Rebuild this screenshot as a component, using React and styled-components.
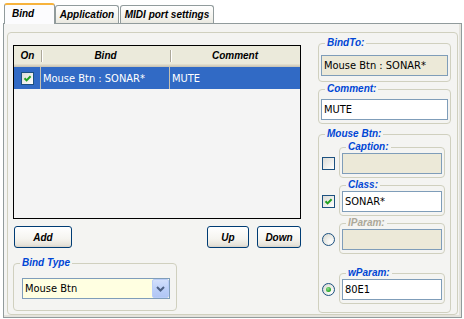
import React from 'react';
import styled, { createGlobalStyle } from 'styled-components';

const GlobalStyle = createGlobalStyle`
  body {
    margin: 0;
    background: #ffffff;
    font-family: "DejaVu Sans Condensed", "DejaVu Sans", sans-serif;
    font-stretch: condensed;
    font-size: 11px;
  }
`;

const Window = styled.div`
  padding: 3px 0 0 3px;
  width: 459px;
`;

const TabStrip = styled.div`
  display: flex;
  align-items: flex-end;
  height: 20px;
  padding-left: 1px;
`;

const Tab = styled.div`
  box-sizing: border-box;
  position: relative;
  z-index: ${p => (p.$active ? 2 : 0)};
  width: ${p => p.$w}px;
  height: ${p => (p.$active ? 21 : 18)}px;
  margin-left: ${p => p.$gap || 0}px;
  margin-bottom: ${p => (p.$active ? -1 : 0)}px;
  display: flex;
  align-items: center;
  justify-content: ${p => (p.$left ? 'flex-start' : 'center')};
  padding: 0 0 ${p => (p.$active ? 3 : 1)}px ${p => (p.$left ? 7 : 0)}px;
  border: 1px solid #919b9c;
  border-bottom: none;
  border-top: ${p => (p.$active ? '2px solid #f7b33d' : '1px solid #919b9c')};
  border-radius: 3px 3px 0 0;
  background: ${p => (p.$active ? '#fcfcfe' : 'linear-gradient(#ffffff, #f3f2ec 70%, #e9e8e0)')};
  font: italic bold 10px "Liberation Sans", sans-serif;
  color: #000;
  white-space: nowrap;
`;

const Panel = styled.div`
  box-sizing: border-box;
  width: 459px;
  height: 295px;
  border: 1px solid #919b9c;
  background: #f4f4f2;
  padding: 8px 3px 2px 3px;
  box-shadow: inset -2px -2px 0 #e4e3dc;
`;

const BigGroup = styled.div`
  box-sizing: border-box;
  height: 100%;
  display: flex;
  gap: 17px;
  padding: 4px 5px 3px 5px;
  border: 1px solid #d0d0bf;
  border-radius: 4px;
`;

const LeftCol = styled.div`
  width: 288px;
  display: flex;
  flex-direction: column;
  padding-top: 8px;
`;

const RightCol = styled.div`
  width: 133px;
  display: flex;
  flex-direction: column;
`;

const List = styled.div`
  box-sizing: border-box;
  height: 174px;
  border: 1px solid #000;
  background: #f4f4f4;
`;

const cols = '27px 129px 1fr';

const Header = styled.div`
  display: grid;
  grid-template-columns: ${cols};
  height: 21px;
  background: #ebeadb;
  box-shadow: inset 0 -1px 0 #cbc7b8, inset 0 -2px 0 #d6d2c2, inset 0 -3px 0 #e2decd;
`;

const HeadCell = styled.div`
  position: relative;
  display: flex;
  align-items: center;
  justify-content: center;
  padding-bottom: 2px;
  font: italic bold 10px "Liberation Sans", sans-serif;
  color: #000;
  &::after {
    content: '';
    display: ${p => (p.$last ? 'none' : 'block')};
    position: absolute;
    right: -1px;
    top: 4px;
    bottom: 5px;
    width: 1px;
    background: #aca899;
    box-shadow: 1px 0 0 #ffffff;
  }
`;

const Row = styled.div`
  display: grid;
  grid-template-columns: ${cols};
  height: 22px;
  background: #316ac5;
  color: #ffffff;
`;

const Cell = styled.div`
  display: flex;
  align-items: center;
  justify-content: ${p => (p.$center ? 'center' : 'flex-start')};
  padding-left: ${p => (p.$center ? 0 : 2)}px;
  border-right: ${p => (p.$last ? 'none' : '1px solid #c5bfae')};
  white-space: nowrap;
`;

const ButtonRow = styled.div`
  display: flex;
  margin-top: 7px;
  padding-left: 1px;
`;

const XpButton = styled.button`
  box-sizing: border-box;
  width: ${p => p.$w}px;
  height: 22px;
  margin-left: ${p => p.$ml || '0'};
  padding: 0;
  border: 1px solid #003c74;
  border-radius: 3px;
  background: linear-gradient(#ffffff, #f5f4ef 60%, #e6e3da 90%, #d6d0c5);
  font: italic bold 10px "Liberation Sans", sans-serif;
  color: #000;
`;

const Group = styled.fieldset`
  box-sizing: border-box;
  min-width: 0;
  margin: ${p => p.$m || '0'};
  padding: ${p => p.$pad || '0 2px 3px 2px'};
  width: ${p => (p.$w ? `${p.$w}px` : 'auto')};
  flex: ${p => (p.$grow ? 1 : 'none')};
  border: 1px solid #d0d0bf;
  border-radius: 4px;
`;

const Caption = styled.legend`
  margin-left: ${p => p.$ml ?? 4}px;
  padding: 0 2px;
  font: italic bold 10px/12px "Liberation Sans", sans-serif;
  color: ${p => (p.$off ? '#aca899' : '#0046d5')};
`;

const Field = styled.div`
  box-sizing: border-box;
  height: 21px;
  display: flex;
  align-items: center;
  padding-left: 2px;
  border: 1px solid #7f9db9;
  background: ${p => (p.$ro ? '#ece9d8' : '#ffffff')};
  color: #000;
  white-space: nowrap;
  overflow: hidden;
`;

const Combo = styled.div`
  box-sizing: border-box;
  width: 148px;
  height: 21px;
  display: flex;
  align-items: center;
  border: 1px solid #7f9db9;
  background: #ffffe1;
  padding-left: 2px;
`;

const ComboText = styled.span`
  flex: 1;
  color: #000;
`;

const DropBtn = styled.span`
  box-sizing: border-box;
  width: 17px;
  height: 19px;
  display: flex;
  align-items: center;
  justify-content: center;
  border: 1px solid #b9cdf8;
  border-radius: 2px;
  background: linear-gradient(#d3e0fc, #bacef8 60%, #b1c6f4);
`;

const OptionRow = styled.div`
  display: flex;
  align-items: flex-end;
  gap: 4px;
  margin-top: ${p => p.$mt ?? 1}px;
`;

const Box = styled.span`
  box-sizing: border-box;
  flex: none;
  width: 13px;
  height: 13px;
  margin-bottom: ${p => p.$mb ?? 0}px;
  display: flex;
  align-items: center;
  justify-content: center;
  border: 1px solid #1c5180;
  border-radius: ${p => (p.$round ? '50%' : '0')};
  background: ${p => (p.$round ? 'radial-gradient(circle at 70% 70%, #ffffff, #e6e6e0 60%, #d5d5ce)' : 'linear-gradient(135deg, #dcdcd7, #f4f4f1 70%, #ffffff)')};
`;

const Dot = styled.span`
  width: 5px;
  height: 5px;
  border-radius: 50%;
  background: radial-gradient(circle at 40% 35%, #8fe08f, #21a121 70%);
`;

const SubGroup = styled(Group)`
  flex: 1;
`;

const Check = () => (
  <svg width="9" height="9" viewBox="0 0 9 9">
    <path d="M1.5 4.2 L3.6 6.4 L7.6 2.2" fill="none" stroke="#21a121" strokeWidth="2" />
  </svg>
);

const Chevron = () => (
  <svg width="9" height="6" viewBox="0 0 9 6">
    <path d="M1 1 L4.5 4.5 L8 1" fill="none" stroke="#4d6185" strokeWidth="2" />
  </svg>
);

const CheckBox = ({ checked }) => (
  <Box $mb={8}>{checked && <Check />}</Box>
);

const Radio = ({ checked }) => (
  <Box $round $mb={8}>{checked && <Dot />}</Box>
);

const params = [
  { label: 'Caption:', value: '', ro: true, ctl: <CheckBox /> },
  { label: 'Class:', value: 'SONAR*', ctl: <CheckBox checked /> },
  { label: 'lParam:', value: '', ro: true, off: true, ctl: <Radio /> },
  { label: 'wParam:', value: '80E1', ctl: <Radio checked />, mt: 13 },
];

export default function App() {
  return (
    <Window>
      <GlobalStyle />
      <TabStrip>
        <Tab $active $left $w={51}>Bind</Tab>
        <Tab $w={64}>Application</Tab>
        <Tab $w={94} $gap={1}>MIDI port settings</Tab>
      </TabStrip>
      <Panel>
        <BigGroup>
          <LeftCol>
            <List>
              <Header>
                <HeadCell>On</HeadCell>
                <HeadCell>Bind</HeadCell>
                <HeadCell $last>Comment</HeadCell>
              </Header>
              <Row>
                <Cell $center>
                  <Box><Check /></Box>
                </Cell>
                <Cell>Mouse Btn : SONAR*</Cell>
                <Cell $last>MUTE</Cell>
              </Row>
            </List>
            <ButtonRow>
              <XpButton $w={58}>Add</XpButton>
              <XpButton $w={42} $ml="auto">Up</XpButton>
              <XpButton $w={44} $ml="8px">Down</XpButton>
            </ButtonRow>
            <Group $w={164} $m="9px 0 0 0" $pad="9px 0 11px 8px">
              <Caption $ml={-2}>Bind Type</Caption>
              <Combo>
                <ComboText>Mouse Btn</ComboText>
                <DropBtn><Chevron /></DropBtn>
              </Combo>
            </Group>
          </LeftCol>
          <RightCol>
            <Group $pad="6px 2px 5px 2px">
              <Caption>BindTo:</Caption>
              <Field $ro>Mouse Btn : SONAR*</Field>
            </Group>
            <Group $m="1px 0 0 0" $pad="4px 2px 3px 2px">
              <Caption>Comment:</Caption>
              <Field>MUTE</Field>
            </Group>
            <Group $grow $m="4px 0 0 0" $pad="0 5px 8px 3px">
              <Caption $ml={3}>Mouse Btn:</Caption>
              {params.map(p => (
                <OptionRow key={p.label} $mt={p.mt}>
                  {p.ctl}
                  <SubGroup>
                    <Caption $off={p.off}>{p.label}</Caption>
                    <Field $ro={p.ro}>{p.value}</Field>
                  </SubGroup>
                </OptionRow>
              ))}
            </Group>
          </RightCol>
        </BigGroup>
      </Panel>
    </Window>
  );
}
